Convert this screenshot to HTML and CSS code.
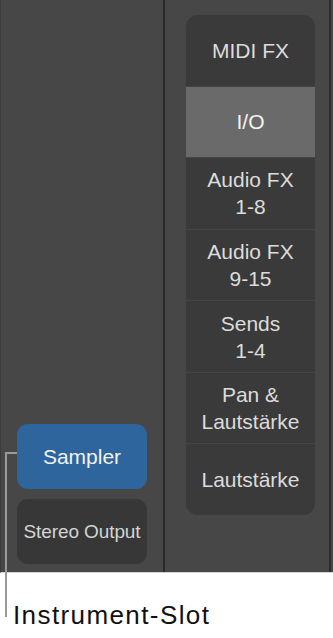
FILE: index.html
```html
<!DOCTYPE html>
<html>
<head>
  <title>Instrument-Slot</title>
  <link rel="stylesheet" href="styles.css">
</head>
<body>
  <div class="figure">
    <div class="strip">
      <div class="channel">
        <div class="slot slot-instrument">Sampler</div>
        <div class="slot slot-output">Stereo Output</div>
      </div>
      <div class="divider"></div>
      <div class="menu-pane">
        <div class="menu">
          <div class="menu-item">MIDI FX</div>
          <div class="menu-item selected">I/O</div>
          <div class="menu-item">Audio FX<br>1-8</div>
          <div class="menu-item">Audio FX<br>9-15</div>
          <div class="menu-item">Sends<br>1-4</div>
          <div class="menu-item">Pan &amp;<br>Lautstärke</div>
          <div class="menu-item">Lautstärke</div>
        </div>
      </div>
      <div class="edge"></div>
    </div>

    <!-- callout -->
    <div class="callout-v"></div>
    <div class="callout-h"></div>
    <div class="callout-label">Instrument-Slot</div>
  </div>
</body>
</html>
```

FILE: styles.css
```css
body {
  margin: 0;
  background-color: #fff;
  font-family: "Liberation Sans", Arial, sans-serif;
}

.figure {
  position: relative;
  width: 333px;
  height: 638px;
}

.strip {
  display: flex;
  height: 573px;
  background-color: #474747;
  border-left: 1px solid #3c3c3c;
  border-bottom: 1px solid #d6d6d6;
  box-sizing: border-box;
}

.channel {
  width: 162px;
  box-sizing: border-box;
  padding: 0 16px 8px 16px;
  display: flex;
  flex-direction: column;
  justify-content: flex-end;
  gap: 10px;
}

.slot {
  height: 65px;
  border-radius: 11px;
  display: flex;
  align-items: center;
  justify-content: center;
  color: #e2e2e2;
}

.slot-instrument {
  background-color: #2f659d;
  color: #f2f2f2;
  font-size: 21px;
}

.slot-output {
  background-color: #373737;
  font-size: 19px;
  letter-spacing: -0.1px;
  color: #d4d4d4;
}

.divider {
  width: 2px;
  background-color: #2a2a2a;
}

.menu-pane {
  flex: 1;
  padding: 15px 14px 0 21px;
}

.menu {
  display: grid;
  grid-template-rows: repeat(7, 1fr);
  row-gap: 1px;
  height: 500px;
  background-color: #454545;
  border-radius: 12px;
  overflow: hidden;
}

.menu-item {
  background-color: #3a3a3a;
  display: flex;
  align-items: center;
  justify-content: center;
  text-align: center;
  color: #dcdcdc;
  font-size: 21px;
  line-height: 27px;
}

.menu-item.selected {
  background-color: #6a6a6a;
  color: #f4f4f4;
}

.edge {
  width: 2px;
  margin-right: 2px;
  background-color: #2c2c2c;
}

.callout-v {
  position: absolute;
  left: 5px;
  top: 452px;
  width: 2px;
  height: 165px;
  background-color: #9a9a9a;
}

.callout-h {
  position: absolute;
  left: 5px;
  top: 452px;
  width: 12px;
  height: 2px;
  background-color: #9a9a9a;
}

.callout-label {
  position: absolute;
  left: 13px;
  top: 600px;
  font-size: 26px;
  line-height: 30px;
  letter-spacing: 1.4px;
  color: #111;
}
```
